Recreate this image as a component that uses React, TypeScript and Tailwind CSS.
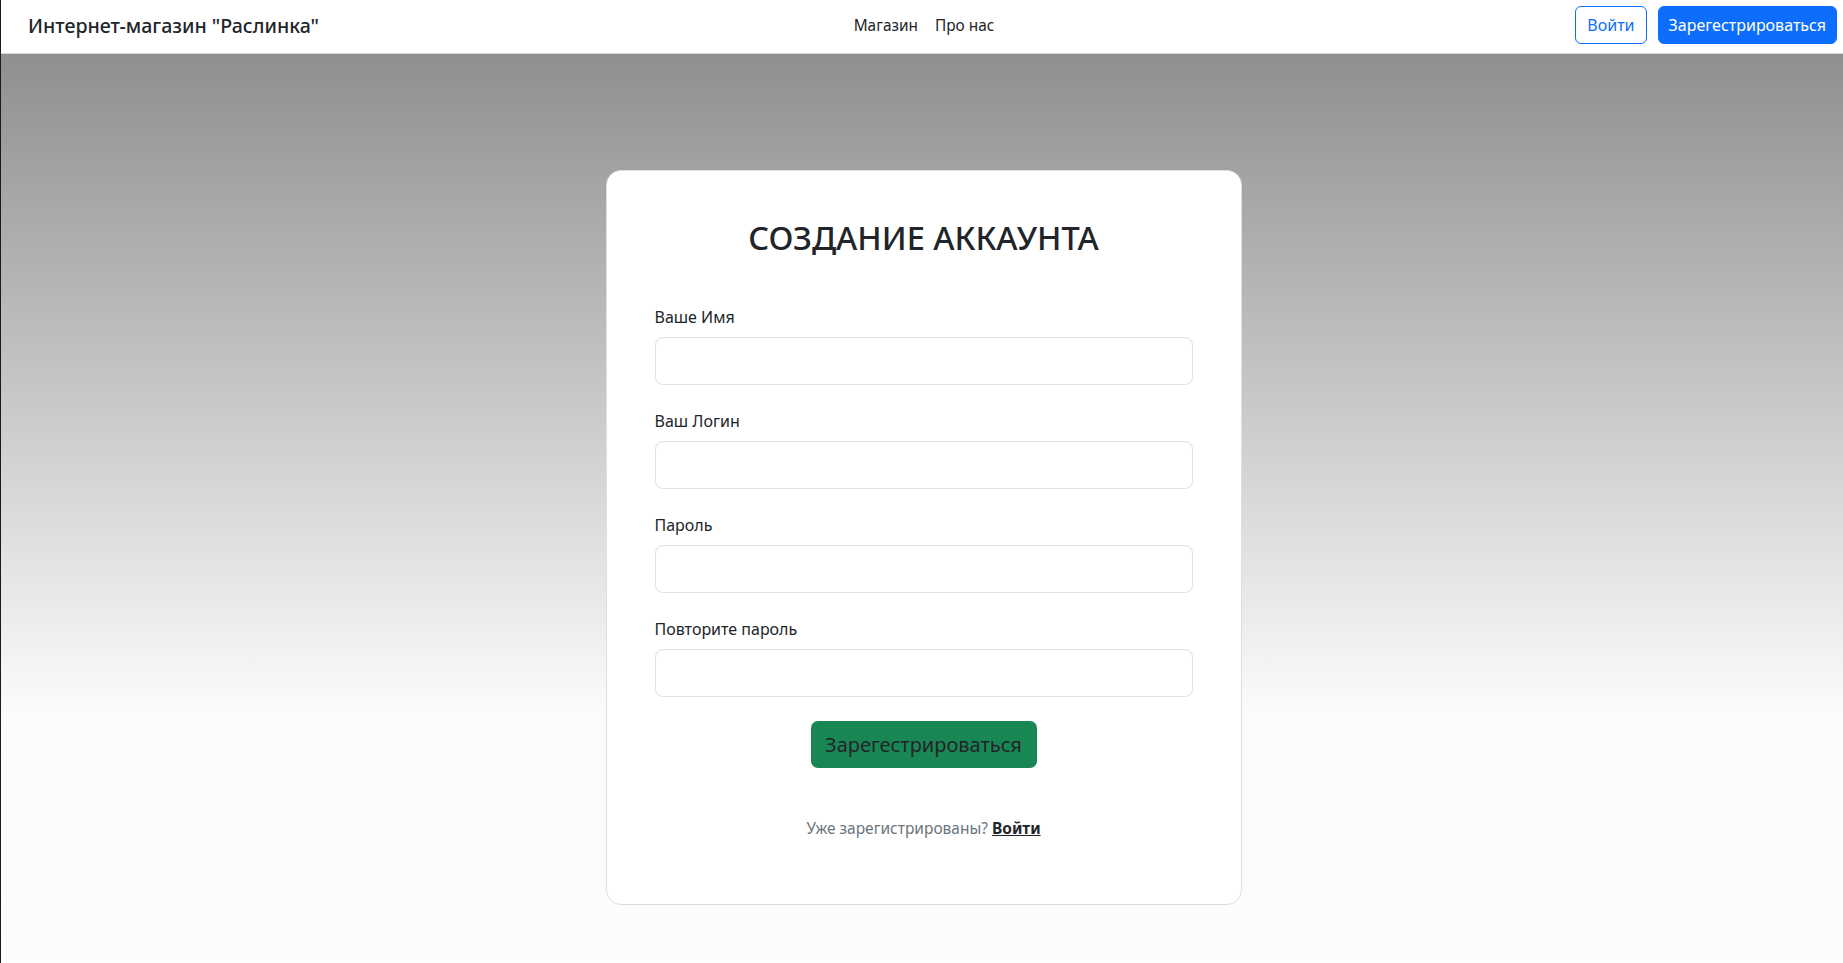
import React from "react";

const font = { fontFamily: '"Noto Sans", "Open Sans", sans-serif' };

function Field({ label, type = "text" }: { label: string; type?: string }) {
  return (
    <div className="mb-6">
      <label className="block mb-2 text-[16px] leading-6 text-[#212529]">{label}</label>
      <input
        type={type}
        className="block w-full h-[48px] rounded-[8px] border border-[#dee2e6] bg-white px-4 text-[20px] outline-none"
      />
    </div>
  );
}

export default function App() {
  return (
    <div
      className="min-h-screen w-full flex flex-col border-l border-[#1c1a1d] bg-white"
      style={font}
    >
      <nav className="h-[54px] flex items-center pl-[27px] pr-[6px] pb-[3px] bg-white border-b border-[#d4d4d4]">
        <div className="flex-1 pt-[2px]">
          <a className="text-[19.6px] font-medium text-[#212529] leading-7">
            Интернет-магазин "Раслинка"
          </a>
        </div>
        <div className="flex items-center gap-[17px] text-[15.4px] text-[#212529] pr-[17px] pt-[2px]">
          <a>Магазин</a>
          <a>Про нас</a>
        </div>
        <div className="flex-1 flex justify-end items-center gap-[11px]">
          <button className="h-[38px] px-[11px] rounded-[6px] border border-[#0d6efd] text-[#0d6efd] text-[16px] bg-white">
            Войти
          </button>
          <button className="h-[38px] px-[10px] rounded-[6px] border border-[#0d6efd] bg-[#0d6efd] text-white text-[16px]">
            Зарегестрироваться
          </button>
        </div>
      </nav>
      <section className="flex-1 flex justify-center pl-[3px] pt-[116px] pb-[58px] bg-[linear-gradient(to_bottom,#8f8f8f_0%,#fbfbfb_72%,#fdfdfd_100%)]">
        <div className="w-[636px] h-[735px] bg-white border border-[#dedede] rounded-[15px] px-12 pt-12">
          <h2 className="text-center text-[32.5px] leading-[38px] font-medium uppercase text-[#212529] mb-12">
            Создание аккаунта
          </h2>
          <Field label="Ваше Имя" />
          <Field label="Ваш Логин" />
          <Field label="Пароль" type="password" />
          <Field label="Повторите пароль" type="password" />
          <div className="flex justify-center">
            <button className="h-[47px] w-[226px] rounded-[7px] bg-[#198754] text-[20px] text-[#212529]">
              Зарегестрироваться
            </button>
          </div>
          <p className="text-center mt-12 text-[15.5px] leading-6 text-[#6c757d]">
            Уже зарегистрированы?{" "}
            <a className="font-bold text-[#212529] underline">Войти</a>
          </p>
        </div>
      </section>
    </div>
  );
}
